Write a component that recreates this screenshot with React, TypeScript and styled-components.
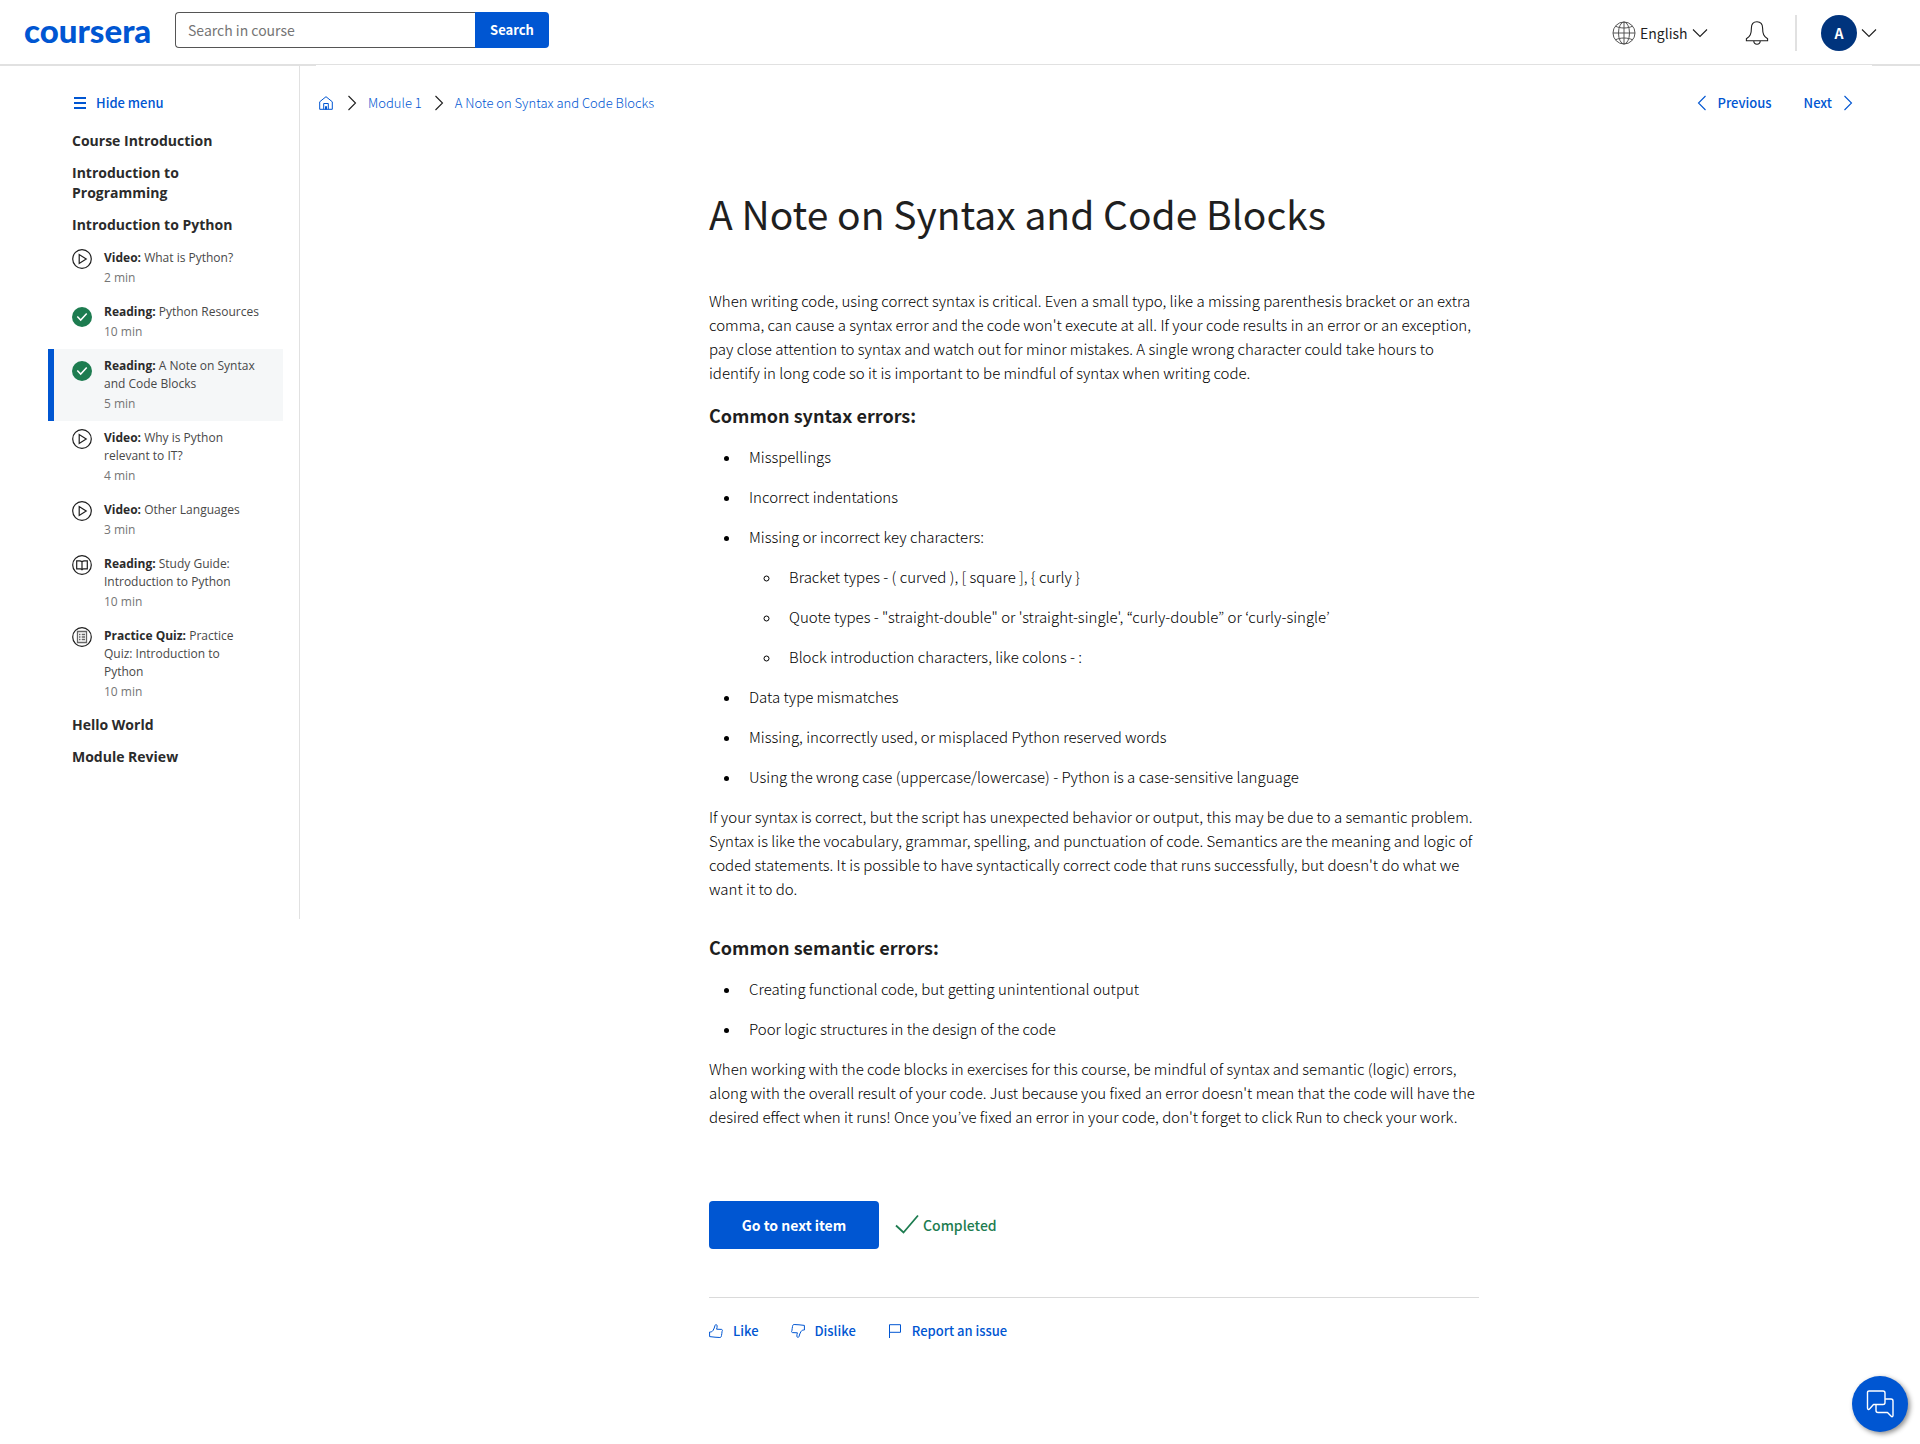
import React from "react";
import styled, { createGlobalStyle } from "styled-components";

const blue = "#0056d2";
const ink = "#1f1f1f";
const rule = "#e1e1e1";
const sans = `"Source Sans Pro", "Noto Sans CJK KR", sans-serif`;
const menuSans = `"Open Sans", sans-serif`;

const GlobalStyle = createGlobalStyle`
  *, *::before, *::after { box-sizing: border-box; }
  body { margin: 0; background: #fff; color: ${ink}; font-family: ${sans}; font-size: 14px; line-height: 24px; }
  button, input, select { font: inherit; color: inherit; }
  button { border: 0; padding: 0; background: none; cursor: pointer; }
  a { color: ${blue}; text-decoration: none; }
  svg { display: block; flex: none; }
  h1, h2, h3, p, ul, ol { margin: 0; padding: 0; }
`;

/* ---------- Icons ---------- */

type ChevronProps = { direction: "left" | "right" | "down"; size?: number };
const chevronPaths = {
  left: "M11.5 1 4.500 8l7 7",
  right: "m4.500 1 7 7-7 7",
  down: "m1 4.500 7 7 7-7",
};
const Chevron = ({ direction, size = 16 }: ChevronProps) => (
  <svg width={size} height={size} viewBox="0 0 16 16" fill="none" stroke="currentColor" strokeWidth="1.100" aria-hidden="true">
    <path d={chevronPaths[direction]} />
  </svg>
);

const Globe = () => (
  <svg width="24" height="24" viewBox="0 0 24 24" fill="none" stroke="#555" strokeWidth="1" aria-hidden="true">
    <circle cx="12" cy="12" r="11" />
    <ellipse cx="12" cy="12" rx="5.5" ry="11" />
    <path d="M12 1v22M1 12h22M3.5 5.2c5 2.4 12 2.4 17 0M3.5 18.8c5-2.4 12-2.4 17 0" />
  </svg>
);

const Bell = () => (
  <svg width="24" height="24" viewBox="0 0 24 24" fill="none" stroke={ink} strokeWidth="1.1" aria-hidden="true">
    <path d="M12 .7c-3.600 0-5.600 2.500-5.600 6.300 0 6-1.200 8.200-5 10.800v2h21.200v-2c-3.800-2.600-5-4.800-5-10.800 0-3.800-2-6.300-5.600-6.300Z" />
    <path d="M8.800 20c.1 2 1.500 3.300 3.200 3.300s3.100-1.300 3.200-3.300" />
  </svg>
);

const Bars = () => (
  <svg width="12" height="12" viewBox="0 0 12 12" fill={blue} aria-hidden="true">
    <path d="M0 0h12v2H0zM0 5h12v2H0zM0 10h12v2H0z" />
  </svg>
);

const Home = () => (
  <svg width="14" height="14" viewBox="0 0 14 14" fill="none" stroke={blue} strokeWidth="1" aria-hidden="true">
    <path d="M.7 5.800 7 .7l6.300 5.100v7.500H.7V5.800Z" />
    <path d="M4.700 13.300V7.500h4.600v5.800M6.500 10.500h1v2.800h-1z" />
  </svg>
);

const PlayCircle = () => (
  <svg width="20" height="20" viewBox="0 0 20 20" fill="none" stroke={ink} strokeWidth="1.200" aria-hidden="true">
    <circle cx="10" cy="10" r="9.300" />
    <path d="M7.200 5.600v8.800l7-4.400-7-4.400Z" />
  </svg>
);

const CheckCircle = () => (
  <svg width="20" height="20" viewBox="0 0 20 20" fill="none" aria-hidden="true">
    <circle cx="10" cy="10" r="10" fill="#1d7c50" />
    <path d="m5.300 9.600 3.400 3.500 6-6.500" stroke="#fff" strokeWidth="1.500" />
  </svg>
);

const BookCircle = () => (
  <svg width="20" height="20" viewBox="0 0 20 20" fill="none" stroke={ink} strokeWidth="1.200" aria-hidden="true">
    <circle cx="10" cy="10" r="9.300" />
    <path d="M10 7c-.6-1-1.500-1.200-2.500-1.200H4.700v8h3.600c.8 0 1.300.2 1.700.8.4-.6.9-.8 1.700-.8h3.600v-8h-2.800C11.500 5.800 10.600 6 10 7Zm0 0v7.500" />
  </svg>
);

const QuizCircle = () => (
  <svg width="20" height="20" viewBox="0 0 20 20" fill="none" stroke={ink} strokeWidth="1.200" aria-hidden="true">
    <circle cx="10" cy="10" r="9.300" />
    <g stroke="#666" strokeWidth="1.300">
      <path d="M5.500 4.500h9v11h-9z" />
      <path d="M7 7.500h1.500M7 10h1.500M7 12.500h1.500M9.700 7.500H13M9.700 10H13M9.700 12.500H13" />
    </g>
  </svg>
);

const Tick = () => (
  <svg width="24" height="24" viewBox="0 0 24 24" fill="none" stroke="#1d7c50" strokeWidth="1.800" aria-hidden="true">
    <path d="m1 12.500 7.500 7L23 2.500" />
  </svg>
);

const thumb =
  "M.6 8c1.700 0 2.600-.3 3.400-1.500C5 5 5.600 3.200 6 1.500 6.300.2 8 .4 8.100 1.700c.1 1.100-.1 2.200-.5 3.500l4.900.2c1 .1 1.200 1.300.6 1.900l-.3 2.200-.3 2-.4 1.300c-.2.500-.6.7-1.200.7l-4.900-.3L.6 12.600V8Z";
const ThumbUp = () => (
  <svg width="14" height="14" viewBox="0 0 14 14" fill="none" stroke={blue} strokeWidth="1" aria-hidden="true">
    <path d={thumb} />
  </svg>
);
const ThumbDown = () => (
  <svg width="14" height="14" viewBox="0 0 14 14" fill="none" stroke={blue} strokeWidth="1" aria-hidden="true">
    <path d={thumb} transform="rotate(180 7 7)" />
  </svg>
);
const Flag = () => (
  <svg width="14" height="14" viewBox="0 0 14 14" fill="none" stroke={blue} strokeWidth="1" aria-hidden="true">
    <path d="M1.500 14V.7h11v7.600h-11" />
  </svg>
);

const ChatBubbles = () => (
  <svg width="28" height="28" viewBox="0 0 28 28" fill="none" stroke="#fff" strokeWidth="1.400" strokeLinejoin="round" aria-hidden="true">
    <path d="M3 1h14a2 2 0 0 1 2 2v9.500a2 2 0 0 1-2 2H7.500L3.500 19c-.9.900-2 .4-2-1V2.500C1.500 1.500 2.200 1 3 1Z" />
    <path d="M19.200 9H25a2 2 0 0 1 2 2v14.500c0 1.200-1 1.600-1.800.8L21.500 22.500H12a2 2 0 0 1-2-2v-6" />
  </svg>
);

/* ---------- Header ---------- */

const Header = styled.header`
  display: flex;
  align-items: flex-start;
  height: 66px;
  padding: 12px 43px 0 24px;
  border-bottom: 2px solid ${rule};
`;

const Logo = styled.a`
  width: 151px;
  font-family: Lato, sans-serif;
  font-size: 33px;
  font-weight: 900;
  line-height: 36px;
`;

const SearchForm = styled.form`
  display: flex;
  height: 36px;
`;

const SearchInput = styled.input`
  width: 300px;
  padding: 0 12px;
  border: 1px solid #555;
  border-right: 0;
  border-radius: 4px 0 0 4px;
  background: #fff;
  &::placeholder { color: #757575; opacity: 1; }
`;

const SearchButton = styled.button`
  width: 74px;
  border-radius: 0 4px 4px 0;
  background: ${blue};
  color: #fff;
  font-size: 13px;
  font-weight: 700;
`;

const HeaderTools = styled.div`
  display: flex;
  align-items: center;
  height: 42px;
  margin-left: auto;
`;

const Language = styled.label`
  display: flex;
  align-items: center;
  gap: 4px;
`;

const LanguageSelect = styled.select`
  appearance: none;
  width: 48px;
  padding: 0;
  border: 0;
  background: none;
`;

const IconButton = styled.button`
  margin: 0 26px 0 37px;
`;

const Account = styled.button`
  display: flex;
  align-items: center;
  gap: 4px;
  padding-left: 24px;
  border-left: 2px solid ${rule};
`;

const Avatar = styled.span`
  width: 36px;
  border-radius: 50%;
  background: #00347d;
  color: #fff;
  font-weight: 700;
  line-height: 36px;
  text-align: center;
`;

/* ---------- Sidebar ---------- */

const Columns = styled.div`
  display: flex;
  align-items: flex-start;
`;

const Sidebar = styled.nav`
  flex: none;
  width: 300px;
  padding: 26px 16px 146px 48px;
  border-right: 1px solid ${rule};
  font-family: ${menuSans};
`;

const HideMenu = styled.button`
  display: flex;
  align-items: center;
  gap: 10px;
  height: 22px;
  margin: 0 0 11px 26px;
  color: ${blue};
  font-family: ${sans};
  font-size: 13px;
  font-weight: 500;
`;

const ModuleTitle = styled.h2`
  padding: 6px 48px 6px 24px;
  color: #2b2b2b;
  font-size: 14px;
  font-weight: 700;
  line-height: 20px;
`;

const ItemList = styled.ul`
  list-style: none;
`;

const ItemLink = styled.a<{ $active?: boolean }>`
  display: flex;
  gap: 12px;
  padding: 8px 22px 8px 18px;
  border-left: 6px solid ${(p) => (p.$active ? blue : "transparent")};
  background: ${(p) => (p.$active ? "#f5f7f8" : "none")};
  color: #484848;
  font-size: 12px;
  line-height: 18px;
`;

const ItemIcon = styled.span<{ $done?: boolean }>`
  padding-top: ${(p) => (p.$done ? 4 : 0)}px;
`;

const ItemName = styled.span`
  font-weight: 400;
  b { color: #2b2b2b; font-weight: 700; }
`;

const Duration = styled.span`
  display: block;
  margin-top: 2px;
  color: #757575;
`;

/* ---------- Main column ---------- */

const Main = styled.main`
  flex: 1;
  margin: -1px 48px 0 16px;
  background: #fff;
`;

const TopBar = styled.div`
  display: flex;
  justify-content: space-between;
  padding: 26px 16px 0 3px;
  font-size: 13px;
`;

const Crumbs = styled.ol`
  display: flex;
  align-items: center;
  gap: 9px;
  list-style: none;
  font-weight: 300;
  li { display: flex; align-items: center; gap: 8px; }
`;

const HomeLink = styled.a`
  padding-right: 2px;
`;

const Pager = styled.div`
  display: flex;
  gap: 32px;
`;

const PagerLink = styled.a`
  display: flex;
  align-items: center;
  gap: 8px;
  font-weight: 500;
`;

const Article = styled.article`
  max-width: 770px;
  margin: 0 auto;
  padding: 70px 0 72px;
`;

const Title = styled.h1`
  margin-bottom: 48px;
  font-size: 39px;
  font-weight: 400;
  line-height: 56px;
`;

const Paragraph = styled.p`
  margin-bottom: 16px;
  color: #000;
  font-size: 15px;
  font-weight: 300;
`;

const Subhead = styled.h2<{ $spaced?: boolean }>`
  margin: ${(p) => (p.$spaced ? 32 : 0)}px 0 16px;
  font-size: 18px;
  font-weight: 700;
  line-height: 28px;
`;

const Bullets = styled.ul`
  padding-left: 32px;
  color: #000;
  font-size: 15px;
  font-weight: 300;
  li { margin-bottom: 16px; padding-left: 8px; }
  li::marker { font-size: 14px; }
  ul { margin-top: 16px; }
`;

const Actions = styled.div`
  display: flex;
  align-items: center;
  gap: 16px;
  margin-top: 72px;
  padding-bottom: 48px;
  border-bottom: 1px solid #dadada;
`;

const NextButton = styled.button`
  width: 170px;
  height: 48px;
  border-radius: 4px;
  background: ${blue};
  color: #fff;
  font-weight: 700;
`;

const Completed = styled.span`
  display: flex;
  align-items: center;
  gap: 4px;
  color: #1d7c50;
  font-weight: 500;
`;

const Feedback = styled.div`
  display: flex;
  gap: 32px;
  padding-top: 21px;
`;

const FeedbackButton = styled.button`
  display: flex;
  align-items: center;
  gap: 10px;
  color: ${blue};
  font-size: 13px;
  font-weight: 500;
`;

const ChatButton = styled.button`
  position: fixed;
  right: 12px;
  bottom: 12px;
  display: grid;
  place-items: center;
  width: 56px;
  height: 56px;
  border-radius: 50%;
  background: ${blue};
  box-shadow: 2px 2px 5px rgba(0, 0, 0, 0.45);
`;

type Item = { kind: string; name: string; time: string; icon: () => React.JSX.Element; done?: boolean; active?: boolean };

const items: Item[] = [
  { kind: "Video", name: "What is Python?", time: "2 min", icon: PlayCircle },
  { kind: "Reading", name: "Python Resources", time: "10 min", icon: CheckCircle, done: true },
  { kind: "Reading", name: "A Note on Syntax and Code Blocks", time: "5 min", icon: CheckCircle, done: true, active: true },
  { kind: "Video", name: "Why is Python relevant to IT?", time: "4 min", icon: PlayCircle },
  { kind: "Video", name: "Other Languages", time: "3 min", icon: PlayCircle },
  { kind: "Reading", name: "Study Guide: Introduction to Python", time: "10 min", icon: BookCircle },
  { kind: "Practice Quiz", name: "Practice Quiz: Introduction to Python", time: "10 min", icon: QuizCircle },
];

export default function App() {
  return (
    <>
      <GlobalStyle />
      <Header>
        <Logo href="#">coursera</Logo>
        <SearchForm role="search" onSubmit={(e) => e.preventDefault()}>
          <SearchInput type="text" placeholder="Search in course" aria-label="Search in course" />
          <SearchButton type="submit">Search</SearchButton>
        </SearchForm>
        <HeaderTools>
          <Language>
            <Globe />
            <LanguageSelect aria-label="Language" defaultValue="English">
              <option>English</option>
            </LanguageSelect>
            <Chevron direction="down" />
          </Language>
          <IconButton type="button" aria-label="Notifications">
            <Bell />
          </IconButton>
          <Account type="button" aria-label="Account">
            <Avatar>A</Avatar>
            <Chevron direction="down" />
          </Account>
        </HeaderTools>
      </Header>
      <Columns>
        <Sidebar aria-label="Course">
          <HideMenu type="button">
            <Bars />
            Hide menu
          </HideMenu>
          <ModuleTitle>Course Introduction</ModuleTitle>
          <ModuleTitle>Introduction to Programming</ModuleTitle>
          <ModuleTitle>Introduction to Python</ModuleTitle>
          <ItemList>
            {items.map(({ kind, name, time, icon: Icon, done, active }) => (
              <li key={name}>
                <ItemLink href="#" $active={active} aria-current={active ? "page" : undefined}>
                  <ItemIcon $done={done}>
                    <Icon />
                  </ItemIcon>
                  <ItemName>
                    <b>{kind}:</b> {name}
                    <Duration>{time}</Duration>
                  </ItemName>
                </ItemLink>
              </li>
            ))}
          </ItemList>
          <ModuleTitle>Hello World</ModuleTitle>
          <ModuleTitle>Module Review</ModuleTitle>
        </Sidebar>
        <Main>
          <TopBar>
            <Crumbs aria-label="Breadcrumb">
              <li>
                <HomeLink href="#" aria-label="Home">
                  <Home />
                </HomeLink>
              </li>
              <li>
                <Chevron direction="right" />
                <a href="#">Module 1</a>
              </li>
              <li>
                <Chevron direction="right" />
                <a href="#">A Note on Syntax and Code Blocks</a>
              </li>
            </Crumbs>
            <Pager>
              <PagerLink href="#">
                <Chevron direction="left" />
                Previous
              </PagerLink>
              <PagerLink href="#">
                Next
                <Chevron direction="right" />
              </PagerLink>
            </Pager>
          </TopBar>
          <Article>
            <Title>A Note on Syntax and Code Blocks</Title>
            <Paragraph>
              When writing code, using correct syntax is critical. Even a small typo, like a missing parenthesis bracket or
              an extra comma, can cause a syntax error and the code won't execute at all. If your code results in an error
              or an exception, pay close attention to syntax and watch out for minor mistakes. A single wrong character
              could take hours to identify in long code so it is important to be mindful of syntax when writing code.
            </Paragraph>
            <Subhead>Common syntax errors:</Subhead>
            <Bullets>
              <li>Misspellings</li>
              <li>Incorrect indentations</li>
              <li>
                Missing or incorrect key characters:
                <Bullets>
                  <li>Bracket types - ( curved ), [ square ], {"{ curly }"}</li>
                  <li>Quote types - "straight-double" or 'straight-single', “curly-double” or ‘curly-single’</li>
                  <li>Block introduction characters, like colons - :</li>
                </Bullets>
              </li>
              <li>Data type mismatches</li>
              <li>Missing, incorrectly used, or misplaced Python reserved words</li>
              <li>Using the wrong case (uppercase/lowercase) - Python is a case-sensitive language</li>
            </Bullets>
            <Paragraph>
              If your syntax is correct, but the script has unexpected behavior or output, this may be due to a semantic
              problem. Syntax is like the vocabulary, grammar, spelling, and punctuation of code. Semantics are the meaning
              and logic of coded statements. It is possible to have syntactically correct code that runs successfully, but
              doesn't do what we want it to do.
            </Paragraph>
            <Subhead $spaced>Common semantic errors:</Subhead>
            <Bullets>
              <li>Creating functional code, but getting unintentional output</li>
              <li>Poor logic structures in the design of the code</li>
            </Bullets>
            <Paragraph>
              When working with the code blocks in exercises for this course, be mindful of syntax and semantic (logic)
              errors, along with the overall result of your code. Just because you fixed an error doesn't mean that the code
              will have the desired effect when it runs! Once you’ve fixed an error in your code, don't forget to click Run
              to check your work.
            </Paragraph>
            <Actions>
              <NextButton type="button">Go to next item</NextButton>
              <Completed>
                <Tick />
                Completed
              </Completed>
            </Actions>
            <Feedback>
              <FeedbackButton type="button">
                <ThumbUp />
                Like
              </FeedbackButton>
              <FeedbackButton type="button">
                <ThumbDown />
                Dislike
              </FeedbackButton>
              <FeedbackButton type="button">
                <Flag />
                Report an issue
              </FeedbackButton>
            </Feedback>
          </Article>
        </Main>
      </Columns>
      <ChatButton type="button" aria-label="Chat">
        <ChatBubbles />
      </ChatButton>
    </>
  );
}
